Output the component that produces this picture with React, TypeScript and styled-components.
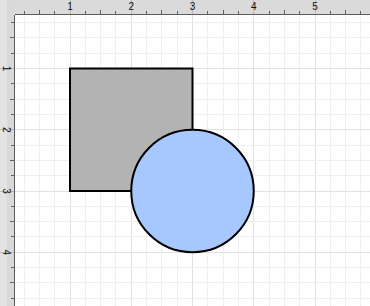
import React from 'react';
import styled, { createGlobalStyle } from 'styled-components';

const GlobalStyle = createGlobalStyle`
  html, body {
    margin: 0;
    padding: 0;
    background: #ffffff;
    font-family: 'Liberation Sans', Arial, sans-serif;
  }
`;

// drawing scale, in page pixels
const UNIT = 61.25;
const ORIGIN_X = 8.75;
const ORIGIN_Y = 7.25;
const RULER = 15;
const WIDTH = 370;
const HEIGHT = 306;

const Window = styled.div`
  display: grid;
  grid-template-columns: ${RULER}px 1fr;
  grid-template-rows: ${RULER}px 1fr;
  width: ${WIDTH}px;
  height: ${HEIGHT}px;
  overflow: hidden;
`;

const Corner = styled.div`
  background: linear-gradient(to right, #e3e3e3 7px, #d9d9d9 7px);
`;

const TopRuler = styled.div`
  background: #dadada;
  border-bottom: 1px solid #5c5c5c;
  overflow: hidden;

  svg {
    display: block;
  }
`;

const SideRuler = styled.div`
  background: linear-gradient(to right, #e3e3e3 7px, #d9d9d9 7px);
  border-right: 1px solid #5c5c5c;
  overflow: hidden;

  svg {
    display: block;
  }
`;

const Canvas = styled.div`
  background: #ffffff;
  overflow: hidden;

  svg {
    display: block;
  }
`;

const Label = styled.text`
  font-family: 'Liberation Sans', Arial, sans-serif;
  font-size: 10px;
  fill: #111111;
`;

const steps = (origin: number, limit: number) => {
  const out: { i: number; pos: number }[] = [];
  for (let i = 0; origin + (i * UNIT) / 4 < limit; i++) {
    out.push({ i, pos: origin + (i * UNIT) / 4 });
  }
  return out;
};

const snap = (v: number) => Math.floor(v) + 0.5;

function HorizontalRuler() {
  const w = WIDTH - RULER;
  return (
    <TopRuler>
      <svg width={w} height={RULER - 1} shapeRendering="crispEdges">
        {steps(ORIGIN_X, WIDTH).map(({ i, pos }) => {
          const x = snap(pos - RULER);
          if (i % 4 === 0) {
            return <line key={i} x1={x} x2={x} y1={0} y2={14} stroke="#b9b9b9" />;
          }
          const len = i % 4 === 2 ? 4 : 3;
          return <line key={i} x1={x} x2={x} y1={14 - len} y2={14} stroke="#606060" />;
        })}
        {[1, 2, 3, 4, 5].map((n) => (
          <Label key={n} x={ORIGIN_X + n * UNIT - RULER} y={10} textAnchor="middle">
            {n}
          </Label>
        ))}
      </svg>
    </TopRuler>
  );
}

function VerticalRuler() {
  const h = HEIGHT - RULER;
  return (
    <SideRuler>
      <svg width={RULER - 1} height={h} shapeRendering="crispEdges">
        {steps(ORIGIN_Y, HEIGHT).map(({ i, pos }) => {
          const y = snap(pos - RULER);
          if (i % 4 === 0) {
            return <line key={i} x1={0} x2={14} y1={y} y2={y} stroke="#b9b9b9" />;
          }
          const len = i % 4 === 2 ? 4 : 3;
          return <line key={i} x1={14 - len} x2={14} y1={y} y2={y} stroke="#606060" />;
        })}
        {[1, 2, 3, 4].map((n) => {
          const y = ORIGIN_Y + n * UNIT - RULER;
          return (
            <Label key={n} x={3} y={y} textAnchor="middle" transform={`rotate(90 3 ${y})`}>
              {n}
            </Label>
          );
        })}
      </svg>
    </SideRuler>
  );
}

function Drawing() {
  const w = WIDTH - RULER;
  const h = HEIGHT - RULER;
  const px = (u: number) => ORIGIN_X + u * UNIT - RULER;
  const py = (u: number) => ORIGIN_Y + u * UNIT - RULER;
  return (
    <Canvas>
      <svg width={w} height={h}>
        <g shapeRendering="crispEdges">
          {steps(ORIGIN_X, WIDTH).map(({ i, pos }) => {
            const x = snap(pos - RULER);
            return (
              <line key={`v${i}`} x1={x} x2={x} y1={0} y2={h} stroke={i % 4 === 0 ? '#e1e1e1' : '#efefef'} />
            );
          })}
          {steps(ORIGIN_Y, HEIGHT).map(({ i, pos }) => {
            const y = snap(pos - RULER);
            return (
              <line key={`h${i}`} x1={0} x2={w} y1={y} y2={y} stroke={i % 4 === 0 ? '#e1e1e1' : '#efefef'} />
            );
          })}
        </g>
        <rect
          x={px(1)}
          y={py(1)}
          width={2 * UNIT}
          height={2 * UNIT}
          fill="#b3b3b3"
          stroke="#000000"
          strokeWidth={2}
        />
        <circle cx={px(3)} cy={py(3)} r={UNIT} fill="#a6c8ff" stroke="#000000" strokeWidth={2} />
      </svg>
    </Canvas>
  );
}

export default function App() {
  return (
    <>
      <GlobalStyle />
      <Window>
        <Corner />
        <HorizontalRuler />
        <VerticalRuler />
        <Drawing />
      </Window>
    </>
  );
}
